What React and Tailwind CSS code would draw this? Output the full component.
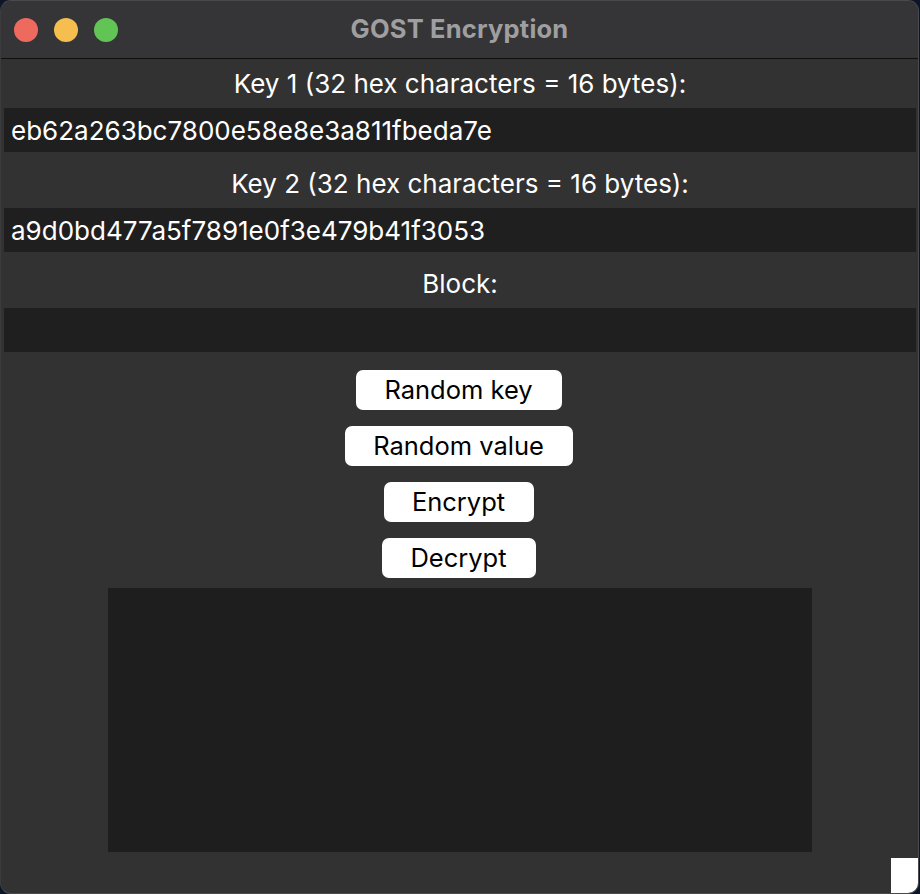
export default function App() {
  const font = { fontFamily: 'Inter, "Noto Sans", sans-serif' };
  return (
    <div className="w-[920px] h-[894px] bg-[#0c1628]" style={font}>
      <div className="w-[919px] h-[894px] rounded-[11px] overflow-hidden bg-[#323232] flex flex-col border border-[#4a4a4c] border-l-[#3c3c3e]">
        {/* Title bar */}
        <div className="relative h-[58px] shrink-0 bg-[#353538] border-b border-[#0f0f0f] flex items-center justify-center">
          <div className="absolute left-[13px] top-[17px] flex gap-[16px]">
            <span className="w-[24px] h-[24px] rounded-full bg-[#ee6a5f]" />
            <span className="w-[24px] h-[24px] rounded-full bg-[#f5be4f]" />
            <span className="w-[24px] h-[24px] rounded-full bg-[#61c454]" />
          </div>
          <span className="text-[25.5px] font-bold text-[#9f9fa0] tracking-[0.2px]">GOST Encryption</span>
        </div>

        {/* Content */}
        <div className="flex flex-col px-[3px] pr-[2px]">
          <div className="h-[49px] flex items-center justify-center text-white text-[26px]">Key 1 (32 hex characters = 16 bytes):</div>
          <div className="h-[44px] bg-[#1f1f1f] flex items-center pl-[7px] text-white text-[26px]">eb62a263bc7800e58e8e3a811fbeda7e</div>
          <div className="h-[56px] flex items-center justify-center text-white text-[26px] pt-[6px]">Key 2 (32 hex characters = 16 bytes):</div>
          <div className="h-[44px] bg-[#1f1f1f] flex items-center pl-[7px] text-white text-[26px]">a9d0bd477a5f7891e0f3e479b41f3053</div>
          <div className="h-[56px] flex items-center justify-center text-white text-[26px] pt-[6px]">Block:</div>
          <div className="h-[44px] bg-[#1f1f1f]" />
        </div>

        <div className="flex flex-col items-center gap-[16px] pt-[18px] pr-[2px]">
          <button className="w-[206px] h-[40px] bg-white rounded-[7px] text-black text-[25.5px] flex items-center justify-center">Random key</button>
          <button className="w-[228px] h-[40px] bg-white rounded-[7px] text-black text-[25.5px] flex items-center justify-center">Random value</button>
          <button className="w-[150px] h-[40px] bg-white rounded-[7px] text-black text-[25.5px] flex items-center justify-center">Encrypt</button>
          <button className="w-[154px] h-[40px] bg-white rounded-[7px] text-black text-[25.5px] flex items-center justify-center">Decrypt</button>
        </div>

        <div className="flex justify-center pt-[10px] pl-[1px]">
          <div className="w-[704px] h-[264px] bg-[#1e1e1e]" />
        </div>

        <div className="flex-1 flex justify-end items-end">
          <div className="w-[27px] h-[35px] bg-white" />
        </div>
      </div>
    </div>
  );
}
